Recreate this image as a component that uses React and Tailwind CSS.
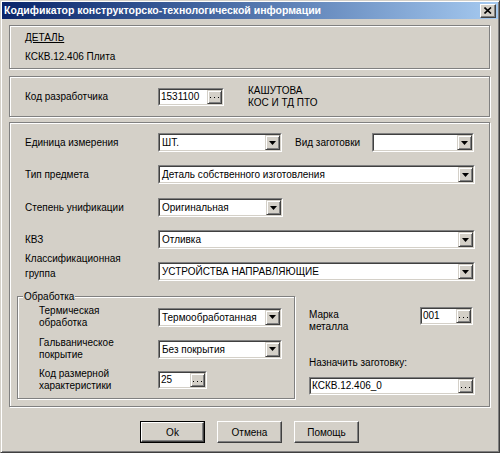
import React from 'react';

const Etched = ({ className = '', children }) => (
    <div className={`border border-[#808080] shadow-[inset_1px_1px_0_#fff,1px_1px_0_#fff] ${className}`}>
        {children}
    </div>
);

const Sunken = ({ className = '', children }) => (
    <div className={`border border-t-[#808080] border-l-[#808080] border-r-white border-b-white ${className}`}>
        <div className="h-full flex border border-t-[#404040] border-l-[#404040] border-r-[#d4d0c8] border-b-[#d4d0c8] bg-white">
            {children}
        </div>
    </div>
);

const SmallButton = ({ children }) => (
    <div className="w-[15px] h-full shrink-0 bg-[#d4d0c8] border border-t-[#d4d0c8] border-l-[#d4d0c8] border-r-[#404040] border-b-[#404040] shadow-[inset_1px_1px_0_#fff,inset_-1px_-1px_0_#808080] flex items-center justify-center">
        {children}
    </div>
);

const Combo = ({ value = '', className = '' }) => (
    <Sunken className={`h-[19px] ${className}`}>
        <div className="flex-1 pl-[2px] leading-[15px] whitespace-nowrap overflow-hidden">{value}</div>
        <SmallButton>
            <svg width="7" height="4" viewBox="0 0 7 4">
                <path d="M0 0h7L3.5 4z" fill="#000" />
            </svg>
        </SmallButton>
    </Sunken>
);

const Browse = ({ value = '', className = '' }) => (
    <Sunken className={`h-[18px] ${className}`}>
        <div className="flex-1 pl-[1px] leading-[14px] whitespace-nowrap overflow-hidden">{value}</div>
        <SmallButton>
            <svg width="9" height="4" viewBox="0 0 9 4" className="mt-[3px]">
                <rect x="0" y="1" width="1" height="1" fill="#000" />
                <rect x="4" y="1" width="1" height="1" fill="#000" />
                <rect x="8" y="1" width="1" height="1" fill="#000" />
            </svg>
        </SmallButton>
    </Sunken>
);

const PushButton = ({ children, isDefault }) => (
    <div className={`w-[65px] h-[22px] ${isDefault ? 'border border-black' : ''}`}>
        <div className="h-full flex items-center justify-center bg-[#d4d0c8] border border-t-white border-l-white border-r-[#404040] border-b-[#404040] shadow-[inset_-1px_-1px_0_#808080]">
            {children}
        </div>
    </div>
);

const App = () => {
    return (
        <div className="w-[500px] h-[453px] bg-[#d4d0c8] border border-t-[#d4d0c8] border-l-[#d4d0c8] border-r-[#404040] border-b-[#404040] shadow-[inset_1px_1px_0_#fff,inset_-1px_-1px_0_#808080] p-[1px] flex flex-col font-['Liberation_Sans',Arial,sans-serif] text-[10px] text-black">
            {/* title bar */}
            <div className="h-[17px] shrink-0 flex items-center bg-linear-to-r from-[#0a246a] to-[#a6caf0] pl-[2px]">
                <span className="text-white font-bold text-[10.5px] leading-[17px] whitespace-nowrap">
                    Кодификатор конструкторско-технологической информации
                </span>
                <div className="ml-auto mr-[2px] w-[16px] h-[14px] bg-[#d4d0c8] border border-t-white border-l-white border-r-[#404040] border-b-[#404040] shadow-[inset_-1px_-1px_0_#808080] flex items-center justify-center">
                    <svg width="8" height="7" viewBox="0 0 8 7">
                        <path d="M0.5 0.5L7 6.5M7 0.5L0.5 6.5" stroke="#000" strokeWidth="1.6" />
                    </svg>
                </div>
            </div>

            <div className="pl-[7px] pt-[6px] flex flex-col">
                {/* деталь */}
                <Etched className="w-[481px] h-[44px] pl-[15px] pt-[5px]">
                    <div className="leading-[14px] underline">ДЕТАЛЬ</div>
                    <div className="leading-[14px] mt-[5px]">КСКВ.12.406 Плита</div>
                </Etched>

                {/* разработчик */}
                <Etched className="w-[481px] h-[41px] mt-[7px] pl-[15px] flex items-center">
                    <div className="w-[133px]">Код разработчика</div>
                    <Browse value="1531100" className="w-[66px]" />
                    <div className="ml-[24px] leading-[12px]">
                        <div>КАШУТОВА</div>
                        <div>КОС И ТД ПТО</div>
                    </div>
                </Etched>

                {/* основные параметры */}
                <Etched className="w-[481px] h-[285px] mt-[5px] pl-[7px] pt-[10px]">
                    <div className="pl-[8px]">
                        <div className="flex items-center h-[19px]">
                            <div className="w-[133px]">Единица измерения</div>
                            <Combo value="ШТ." className="w-[124px]" />
                            <div className="ml-[13px] w-[77px]">Вид заготовки</div>
                            <Combo className="w-[102px]" />
                        </div>
                        <div className="flex items-center h-[19px] mt-[13px]">
                            <div className="w-[133px]">Тип предмета</div>
                            <Combo value="Деталь собственного изготовления" className="w-[317px]" />
                        </div>
                        <div className="flex items-center h-[19px] mt-[14px]">
                            <div className="w-[133px]">Степень унификации</div>
                            <Combo value="Оригинальная" className="w-[125px]" />
                        </div>
                        <div className="flex items-center h-[19px] mt-[13px]">
                            <div className="w-[133px]">КВЗ</div>
                            <Combo value="Отливка" className="w-[317px]" />
                        </div>
                        <div className="flex items-start mt-[2px]">
                            <div className="w-[133px] leading-[15px]">
                                Классификационная
                                <br />
                                группа
                            </div>
                            <Combo value="УСТРОЙСТВА НАПРАВЛЯЮЩИЕ" className="w-[317px] mt-[11px]" />
                        </div>
                    </div>

                    <div className="flex items-start mt-[15px]">
                        {/* Обработка */}
                        <Etched className="relative w-[278px] h-[103px] pl-[21px] pt-[11px]">
                            <span className="absolute left-[5px] top-[-7px] px-[1px] leading-[13px] bg-[#d4d0c8]">Обработка</span>
                            <div className="flex items-center h-[18px]">
                                <div className="w-[119px] leading-[12px]">
                                    Термическая
                                    <br />
                                    обработка
                                </div>
                                <Combo value="Термообработанная" className="w-[124px] h-[18px]" />
                            </div>
                            <div className="flex items-center h-[18px] mt-[14px]">
                                <div className="w-[119px] leading-[12px]">
                                    Гальваническое
                                    <br />
                                    покрытие
                                </div>
                                <Combo value="Без покрытия" className="w-[124px] h-[18px]" />
                            </div>
                            <div className="flex items-center h-[18px] mt-[13px]">
                                <div className="w-[119px] leading-[12px]">
                                    Код размерной
                                    <br />
                                    характеристики
                                </div>
                                <Browse value="25" className="w-[49px]" />
                            </div>
                        </Etched>

                        {/* справа */}
                        <div className="ml-[14px] pt-[11px] flex flex-col">
                            <div className="flex items-start">
                                <div className="w-[111px] mt-[2px] leading-[12px]">
                                    Марка
                                    <br />
                                    металла
                                </div>
                                <Browse value="001" className="w-[53px] h-[17px]" />
                            </div>
                            <div className="mt-[23px] leading-[14px]">Назначить заготовку:</div>
                            <Browse value="КСКВ.12.406_0" className="w-[166px] mt-[7px]" />
                        </div>
                    </div>
                </Etched>

                {/* кнопки */}
                <div className="w-[481px] mt-[14px] flex justify-center gap-[12px]">
                    <PushButton isDefault>Ok</PushButton>
                    <PushButton>Отмена</PushButton>
                    <PushButton>Помощь</PushButton>
                </div>
            </div>
        </div>
    );
};

export default App;
